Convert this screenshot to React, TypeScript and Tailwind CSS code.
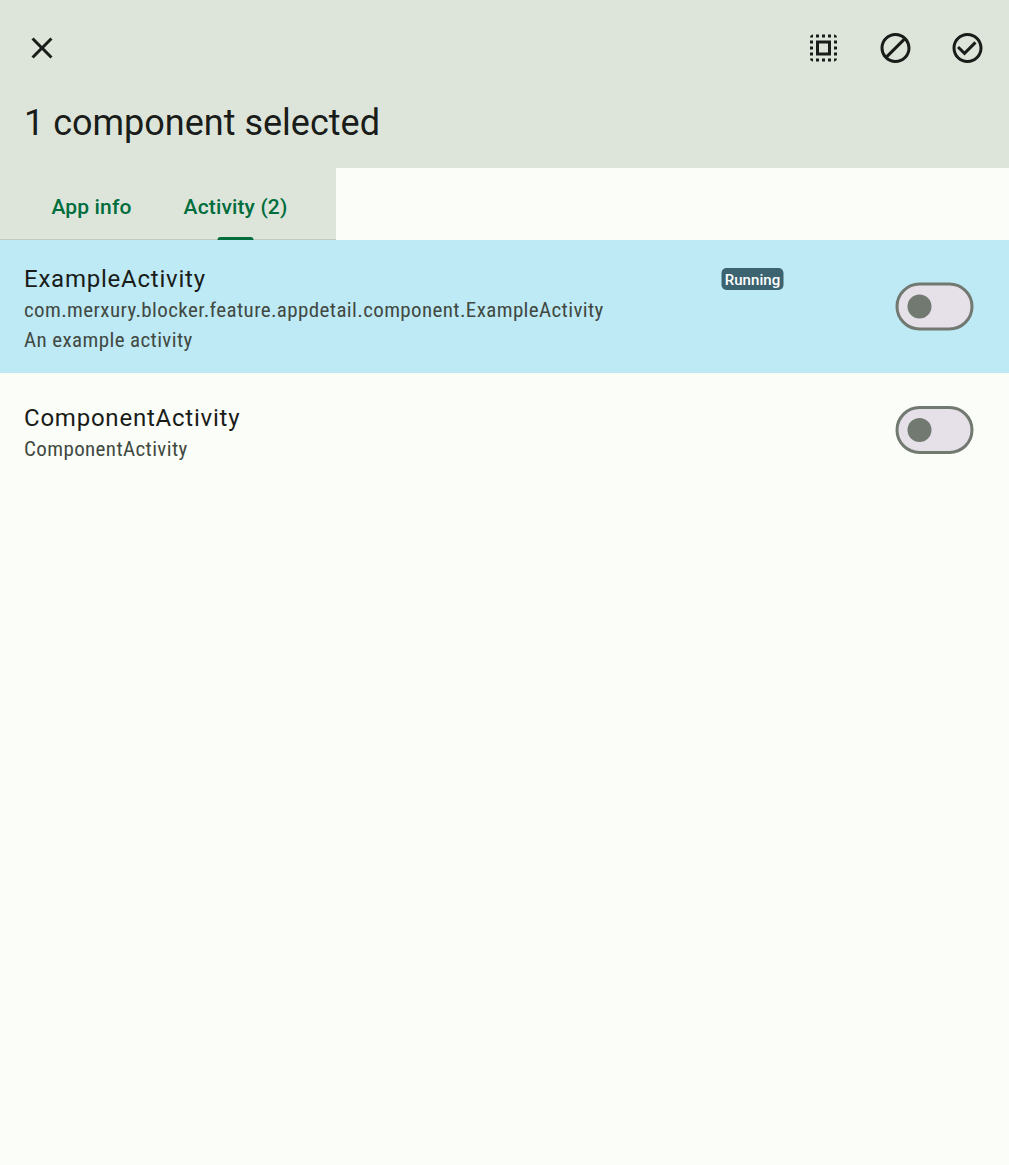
import { MdBlock, MdCheckCircleOutline, MdClose, MdSelectAll } from "react-icons/md";

function Toggle() {
  return (
    <div
      role="switch"
      aria-checked="false"
      className="flex h-12 w-[78px] shrink-0 translate-x-[-0.5px] items-center rounded-full border-3 border-[#717971] bg-[#e6e0e9] pl-[9px]"
    >
      <div className="size-6 rounded-full bg-[#717971]" />
    </div>
  );
}

const title = "pt-1 text-2xl leading-[31px] tracking-[0.77px]";
const detail =
  "whitespace-nowrap font-['Roboto_Condensed','Roboto',sans-serif] font-stretch-condensed text-[21px] leading-[30px] tracking-[0.38px] text-[#414942]";

export default function App() {
  return (
    <div className="min-h-screen bg-[#fbfdf8] font-['Roboto',sans-serif] text-[#191c19]">
      <header className="h-[168px] bg-[#dde5db]">
        <div className="flex h-24 items-center justify-between pr-6 pl-6">
          <MdClose size={36} />
          <div className="flex translate-x-[0.5px] gap-9">
            <MdSelectAll size={36} />
            <MdBlock size={36} />
            <MdCheckCircleOutline size={36} />
          </div>
        </div>
        <h1 className="pl-6 text-[36px] leading-[54px]">1 component selected</h1>
      </header>
      <nav className="flex h-[72px] w-[336px] border-b border-[#c1c9bf] bg-[#dde5db] pl-[15px] text-[21px] font-medium tracking-[0.15px] text-[#006d3d]">
        <div className="flex w-[153px] items-center justify-center pt-2">App info</div>
        <div className="relative flex w-[135px] items-center justify-center pt-2">
          Activity (2)
          <div className="absolute -bottom-px left-[49px] h-[3px] w-9 translate-x-[0.5px] rounded-t-[3px] bg-[#006d3d]" />
        </div>
      </nav>
      <main>
        <section className="flex h-[133px] items-center bg-[#beeaf6] pr-[35.5px] pl-6">
          <div className="w-[698px] pt-0.5">
            <h2 className={title}>ExampleActivity</h2>
            <p className={detail}>com.merxury.blocker.feature.appdetail.component.ExampleActivity</p>
            <p className={detail}>An example activity</p>
          </div>
          <span className="mt-7 h-[22px] w-[62px] translate-x-[-0.5px] self-start rounded-[5px] bg-[#3b6470] text-center text-[15px] leading-[24px] font-medium tracking-[0.05px] text-white">
            Running
          </span>
          <div className="ml-auto translate-y-[0.5px] pb-px">
            <Toggle />
          </div>
        </section>
        <section className="flex h-[114px] items-center justify-between pr-[35.5px] pl-6">
          <div className="pt-0.5">
            <h2 className={title}>ComponentActivity</h2>
            <p className={detail}>ComponentActivity</p>
          </div>
          <Toggle />
        </section>
      </main>
    </div>
  );
}
